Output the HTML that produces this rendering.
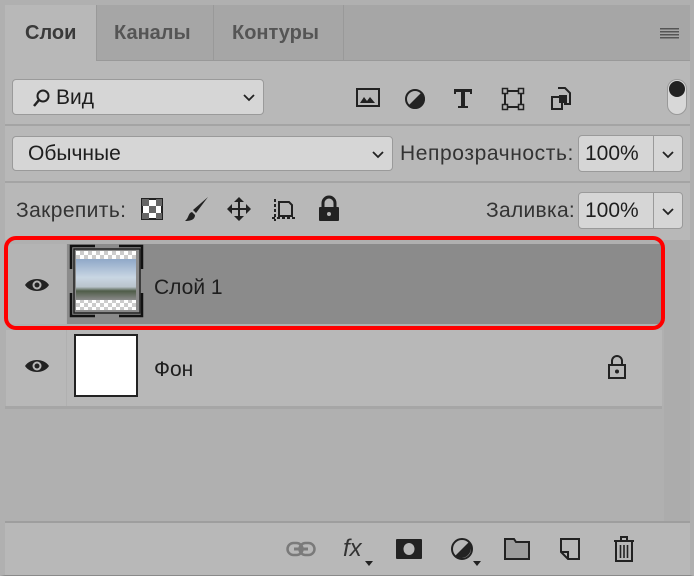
<!DOCTYPE html><html><head><meta charset="utf-8"><style>
*{margin:0;padding:0;box-sizing:border-box}
body{width:694px;height:576px;background:#b8b8b8;font-family:"Liberation Sans",sans-serif;position:relative;overflow:hidden;color:#1e1e1e}
.a{position:absolute}
.box{position:absolute;background:#d6d6d6;border:1px solid #9a9a9a;border-radius:4px}
.t{position:absolute;font-size:20px;white-space:nowrap}
svg{position:absolute;overflow:visible}
</style></head><body>
<div class="a" style="left:0;top:0;width:694px;height:576px;border:1px solid #8a8a8a;border-top:5px solid #b0b0b0;border-left:5px solid #b0b0b0;border-right:4px solid #b0b0b0"></div>
<!-- tab bar -->
<div class="a" style="left:5px;top:5px;width:685px;height:56px;background:#a6a6a6;border-bottom:1px solid #999"></div>
<div class="a" style="left:5px;top:5px;width:91px;height:57px;background:#b8b8b8"></div>
<div class="a" style="left:96px;top:5px;width:1px;height:56px;background:#999"></div>
<div class="a" style="left:213px;top:5px;width:1px;height:56px;background:#999"></div>
<div class="a" style="left:343px;top:5px;width:1px;height:56px;background:#999"></div>
<div class="t" style="left:25px;top:22px;font-weight:bold;color:#3a3a3a">Слои</div>
<div class="t" style="left:114px;top:22px;font-weight:bold;color:#555">Каналы</div>
<div class="t" style="left:232px;top:22px;font-weight:bold;color:#555">Контуры</div>
<div class="a" style="left:660px;top:28px;width:19px;height:12px;background:repeating-linear-gradient(#555 0 1.5px,transparent 1.5px 3px)"></div>
<!-- filter row -->
<div class="box" style="left:12px;top:79px;width:252px;height:36px"></div>
<svg style="left:32px;top:89px" width="20" height="20"><circle cx="11" cy="7" r="5.5" fill="none" stroke="#222" stroke-width="2"/><line x1="7" y1="11" x2="2" y2="17" stroke="#222" stroke-width="2.5"/></svg>
<div class="t" style="left:56px;top:86px;font-size:21px">Вид</div>
<svg style="left:243px;top:94px" width="12" height="8"><path d="M1 1L6 6L11 1" fill="none" stroke="#222" stroke-width="1.8"/></svg>
<svg style="left:356px;top:88px" width="24" height="20"><rect x="1" y="1" width="22" height="17" fill="none" stroke="#222" stroke-width="2"/><path d="M4 15L8 9L11 13L14 9L19 15Z" fill="#222"/></svg>
<svg style="left:404px;top:88px" width="22" height="22"><circle cx="11" cy="11" r="9" fill="none" stroke="#222" stroke-width="2"/><path d="M18 4A9 9 0 0 1 4 18Z" fill="#222"/></svg>
<svg style="left:453px;top:88px" width="20" height="22"><path d="M1 1H19V6H17V4H12V18H15V20H5V18H8V4H3V6H1Z" fill="#222"/></svg>
<svg style="left:502px;top:88px" width="22" height="22"><rect x="3" y="3" width="16" height="16" fill="none" stroke="#222" stroke-width="2"/><rect x="0.5" y="0.5" width="5" height="5" fill="#b8b8b8" stroke="#222" stroke-width="1.5"/><rect x="16.5" y="0.5" width="5" height="5" fill="#b8b8b8" stroke="#222" stroke-width="1.5"/><rect x="0.5" y="16.5" width="5" height="5" fill="#b8b8b8" stroke="#222" stroke-width="1.5"/><rect x="16.5" y="16.5" width="5" height="5" fill="#b8b8b8" stroke="#222" stroke-width="1.5"/></svg>
<svg style="left:551px;top:87px" width="20" height="24"><path d="M7 1H14L19 6V17H13" fill="none" stroke="#222" stroke-width="2"/><rect x="1" y="10" width="10" height="12" fill="none" stroke="#222" stroke-width="2"/><rect x="8" y="8" width="8" height="8" fill="#222"/></svg>
<div class="a" style="left:667px;top:79px;width:20px;height:36px;border-radius:10px;background:#d8d8d8;border:1px solid #999"></div>
<div class="a" style="left:669px;top:81px;width:16px;height:16px;border-radius:8px;background:#222"></div>
<div class="a" style="left:5px;top:124px;width:685px;height:2px;background:#a4a4a4"></div>
<!-- blend row -->
<div class="box" style="left:12px;top:136px;width:381px;height:35px"></div>
<div class="t" style="left:28px;top:142px;font-size:21px">Обычные</div>
<svg style="left:372px;top:151px" width="12" height="8"><path d="M1 1L6 6L11 1" fill="none" stroke="#222" stroke-width="1.8"/></svg>
<div class="t" style="left:400px;top:142px;color:#333;font-size:21px;letter-spacing:0.6px">Непрозрачность:</div>
<div class="box" style="left:578px;top:135px;width:105px;height:37px"></div>
<div class="a" style="left:653px;top:135px;width:1px;height:37px;background:#9a9a9a"></div>
<div class="t" style="left:585px;top:142px;font-size:21px">100%</div>
<svg style="left:662px;top:151px" width="12" height="8"><path d="M1 1L6 6L11 1" fill="none" stroke="#222" stroke-width="1.8"/></svg>
<div class="a" style="left:5px;top:181px;width:685px;height:2px;background:#a4a4a4"></div>
<!-- lock row -->
<div class="t" style="left:16px;top:199px;color:#333;font-size:21px;letter-spacing:0.4px">Закрепить:</div>
<svg style="left:141px;top:198px" width="22" height="22"><rect x="1" y="1" width="20" height="20" fill="#fff" stroke="#222" stroke-width="2"/><path d="M1 1h7v7H1zM15 1h6v7h-6zM8 8h7v7H8zM1 15h7v6H1zM15 15h6v6h-6z" fill="#666"/></svg>
<svg style="left:184px;top:196px" width="26" height="28"><path d="M24 1L12 17L9 14Z" fill="#222"/><path d="M8 16C4 17 5 22 1 25C6 25 11 24 11 19Z" fill="#222"/></svg>
<svg style="left:226px;top:196px" width="26" height="26"><path d="M13 1L8 6H18ZM13 25L8 20H18ZM1 13L6 8V18ZM25 13L20 8V18Z" fill="#222"/><path d="M13 5V21M5 13H21" stroke="#222" stroke-width="2"/></svg>
<svg style="left:270px;top:197px" width="28" height="26"><path d="M5 2V24M2 21H26" fill="none" stroke="#222" stroke-width="2" stroke-dasharray="3 2"/><path d="M9 5H19L22 8V19H9Z" fill="none" stroke="#222" stroke-width="2"/></svg>
<svg style="left:318px;top:196px" width="22" height="26"><path d="M5 11V7A6 6 0 0 1 17 7V11" fill="none" stroke="#222" stroke-width="3"/><rect x="1" y="11" width="20" height="14" rx="1" fill="#222"/><circle cx="11" cy="18" r="2" fill="#b8b8b8"/></svg>
<div class="t" style="left:486px;top:199px;color:#333;font-size:21px;letter-spacing:0.3px">Заливка:</div>
<div class="box" style="left:578px;top:192px;width:105px;height:37px"></div>
<div class="a" style="left:653px;top:192px;width:1px;height:37px;background:#9a9a9a"></div>
<div class="t" style="left:585px;top:199px;font-size:21px">100%</div>
<svg style="left:662px;top:208px" width="12" height="8"><path d="M1 1L6 6L11 1" fill="none" stroke="#222" stroke-width="1.8"/></svg>
<!-- layers area -->
<div class="a" style="left:5px;top:240px;width:659px;height:282px;background:#b0b0b0"></div>
<div class="a" style="left:664px;top:240px;width:26px;height:282px;background:#acacac"></div>
<div class="a" style="left:6px;top:244px;width:60px;height:80px;background:#b4b4b4"></div>
<div class="a" style="left:67px;top:244px;width:595px;height:80px;background:#8b8b8b"></div>
<div class="a" style="left:6px;top:330px;width:60px;height:76px;background:#b8b8b8"></div>
<div class="a" style="left:67px;top:330px;width:595px;height:76px;background:#b8b8b8"></div>
<div class="a" style="left:5px;top:406px;width:657px;height:3px;background:#a6a6a6"></div>
<div class="a" style="left:4px;top:236px;width:661px;height:94px;border:4px solid #f00;border-radius:12px"></div>
<svg style="left:24px;top:276px" width="26" height="18"><path d="M1 9C6 1 20 1 25 9C20 17 6 17 1 9Z" fill="#222"/><circle cx="13" cy="9" r="4.5" fill="#b4b4b4"/><circle cx="13" cy="9" r="2.5" fill="#222"/></svg>
<svg style="left:24px;top:357px" width="26" height="18"><path d="M1 9C6 1 20 1 25 9C20 17 6 17 1 9Z" fill="#222"/><circle cx="13" cy="9" r="4.5" fill="#b8b8b8"/><circle cx="13" cy="9" r="2.5" fill="#222"/></svg>
<div class="a" style="left:76px;top:251px;width:60px;height:59px;background-color:#fff;background-image:linear-gradient(45deg,#ccc 25%,transparent 25%,transparent 75%,#ccc 75%),linear-gradient(45deg,#ccc 25%,transparent 25%,transparent 75%,#ccc 75%);background-size:8px 8px;background-position:0 0,4px 4px"></div>
<div class="a" style="left:76px;top:259px;width:60px;height:41px;background:linear-gradient(#8fa8c8,#c9d6e3 45%,#b9c4cc 68%,#4f5c48 78%,#8a8a8a 100%)"></div>
<svg style="left:70px;top:245px" width="74" height="72"><path d="M1 24V1H25M49 1H72V24M72 48V71H49M25 71H1V48" fill="none" stroke="#111" stroke-width="2.5"/><rect x="4" y="4" width="66" height="64" fill="none" stroke="#222" stroke-width="1.5"/></svg>
<div class="t" style="left:154px;top:276px;font-size:21px">Слой 1</div>
<div class="a" style="left:74px;top:334px;width:64px;height:63px;background:#fff;border:2px solid #222"></div>
<div class="t" style="left:154px;top:358px;font-size:21px">Фон</div>
<svg style="left:607px;top:355px" width="20" height="24"><path d="M5 10V6A5 5 0 0 1 15 6V10" fill="none" stroke="#222" stroke-width="2"/><rect x="2" y="10" width="16" height="13" fill="none" stroke="#222" stroke-width="2"/><circle cx="10" cy="16.5" r="2" fill="#222"/></svg>
<!-- bottom -->
<div class="a" style="left:5px;top:521px;width:685px;height:2px;background:#9e9e9e"></div>
<div class="a" style="left:5px;top:523px;width:685px;height:51px;background:#b8b8b8"></div>
<svg style="left:286px;top:541px" width="30" height="16"><rect x="1.5" y="2" width="15" height="12" rx="6" fill="none" stroke="#7a7a7a" stroke-width="2.5"/><rect x="13.5" y="2" width="15" height="12" rx="6" fill="none" stroke="#7a7a7a" stroke-width="2.5"/><line x1="8" y1="8" x2="22" y2="8" stroke="#7a7a7a" stroke-width="3"/></svg>
<div class="t" style="left:343px;top:535px;font-size:24px;font-style:italic;color:#333">fx</div>
<svg style="left:365px;top:561px" width="8" height="5"><path d="M0 0H8L4 5Z" fill="#222"/></svg>
<svg style="left:396px;top:539px" width="26" height="20"><rect width="26" height="20" rx="1" fill="#222"/><ellipse cx="13" cy="10" rx="5.5" ry="6" fill="#b8b8b8"/></svg>
<svg style="left:450px;top:537px" width="24" height="24"><circle cx="12" cy="12" r="10" fill="none" stroke="#222" stroke-width="2"/><path d="M19 5A10 10 0 0 1 5 19Z" fill="#222"/></svg>
<svg style="left:473px;top:561px" width="8" height="5"><path d="M0 0H8L4 5Z" fill="#222"/></svg>
<svg style="left:504px;top:538px" width="26" height="22"><path d="M1 1H10L12 4H25V21H1Z" fill="#9d9d9d" stroke="#222" stroke-width="2"/></svg>
<svg style="left:560px;top:538px" width="20" height="22"><path d="M1 1H19V21H8L1 14Z" fill="#b8b8b8" stroke="#222" stroke-width="2"/><path d="M1 14H8V21" fill="none" stroke="#222" stroke-width="2"/></svg>
<svg style="left:613px;top:536px" width="22" height="26"><path d="M1 5H21M8 5V1H14V5" fill="none" stroke="#222" stroke-width="2"/><path d="M3 5V25H19V5" fill="none" stroke="#222" stroke-width="2"/><path d="M7.5 9V22M11 9V22M14.5 9V22" stroke="#222" stroke-width="1.6"/></svg>
</body></html>
